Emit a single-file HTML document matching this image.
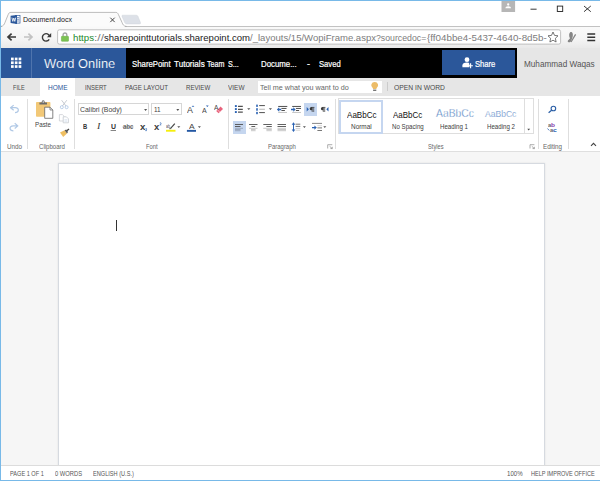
<!DOCTYPE html>
<html><head><meta charset="utf-8"><title>Document.docx</title>
<style>
html,body{margin:0;padding:0;}
body{width:600px;height:481px;position:relative;overflow:hidden;background:#fff;font-family:"Liberation Sans",sans-serif;}
.a{position:absolute;}
.t{position:absolute;white-space:pre;transform-origin:0 0;font-family:"Liberation Sans",sans-serif;}
svg{position:absolute;overflow:visible;}

</style></head>
<body>
<!-- ===== chrome title bar ===== -->
<div class="a" style="left:0;top:0;width:600px;height:26px;background:#fff"></div>
<!-- toolbar -->
<div class="a" style="left:0;top:26px;width:600px;height:22px;background:linear-gradient(#fafafa 0%,#f4f4f4 60%,#e9e9e9 100%)"></div>
<div class="a" style="left:0;top:26px;width:600px;height:0.8px;background:#c2c2c2"></div>
<!-- tab + new tab -->
<svg style="left:0;top:0" width="600" height="48" viewBox="0 0 600 48">
  <path d="M122.7 15.2 L136.2 15.2 Q137.4 15.2 137.9 16.3 L140.5 22.6 Q141 23.9 139.6 23.9 L126.6 23.9 Q125.3 23.9 124.8 22.8 L122 16.4 Q121.6 15.2 122.7 15.2Z" fill="#dde1e8" stroke="#d0d4db" stroke-width="0.5"/>
  <path d="M0.5 26.4 C3.5 26.4 4.2 24.4 5 22.4 L8.2 14.5 C8.9 12.8 9.6 12.4 11 12.4 L115.5 12.4 C117 12.4 117.6 12.8 118.4 14.5 L122 22.4 C122.8 24.4 123.6 26.4 126.5 26.4 Z" fill="#fbfbfb" stroke="none"/>
  <path d="M0.5 26.4 C3.5 26.4 4.2 24.4 5 22.4 L8.2 14.5 C8.9 12.8 9.6 12.4 11 12.4 L115.5 12.4 C117 12.4 117.6 12.8 118.4 14.5 L122 22.4 C122.8 24.4 123.6 26.4 126.5 26.4" fill="none" stroke="#8e8e8e" stroke-width="0.6"/>
  <rect x="2.5" y="25.9" width="122" height="1.1" fill="#fafafa"/>
</svg>
<!-- url box -->
<svg style="left:0;top:0" width="600" height="48" viewBox="0 0 600 48"><rect x="57.6" y="29.8" width="503" height="14.3" rx="1.8" fill="#fff" stroke="#b3b3b3" stroke-width="0.8"/></svg>

<!-- ===== Office header ===== -->
<div class="a" style="left:0;top:48px;width:126px;height:30px;background:#2b579a"></div>
<div class="a" style="left:31px;top:48px;width:1px;height:30px;background:#4f74ad"></div>
<div class="a" style="left:126px;top:48px;width:391px;height:30px;background:#000"></div>
<div class="a" style="left:441.7px;top:50.3px;width:73px;height:25px;background:#2b579a"></div>
<div class="a" style="left:517px;top:48px;width:83px;height:30px;background:#e6e6e6"></div>

<!-- ===== tab row ===== -->
<div class="a" style="left:0;top:78px;width:600px;height:17.6px;background:#e6e6e6"></div>
<div class="a" style="left:40px;top:78px;width:34.7px;height:18px;background:#fff"></div>
<div class="a" style="left:257.5px;top:80.8px;width:124.5px;height:12.2px;background:#fff"></div>
<div class="a" style="left:387px;top:82px;width:1px;height:9px;background:#cbcbcb"></div>

<!-- ===== ribbon ===== -->
<div class="a" style="left:0;top:95.6px;width:600px;height:55.4px;background:#fff"></div>
<div class="a" style="left:0;top:150.8px;width:600px;height:1px;background:#dfdfdf"></div>
<!-- group separators -->
<div class="a" style="left:27.2px;top:99px;width:0.8px;height:49.5px;background:#dedede"></div>
<div class="a" style="left:74.2px;top:99px;width:0.8px;height:49.5px;background:#dedede"></div>
<div class="a" style="left:228.4px;top:99px;width:0.8px;height:49.5px;background:#dedede"></div>
<div class="a" style="left:335px;top:99px;width:0.8px;height:49.5px;background:#dedede"></div>
<div class="a" style="left:537.7px;top:99px;width:0.8px;height:49.5px;background:#dedede"></div>
<div class="a" style="left:568.1px;top:99px;width:0.8px;height:49.5px;background:#dedede"></div>
<!-- font boxes -->
<div class="a" style="left:78.3px;top:103.3px;width:71.2px;height:12px;border:0.8px solid #d6d6d6;box-sizing:border-box;background:#fff"></div>
<div class="a" style="left:151.3px;top:103.3px;width:30.4px;height:12px;border:0.8px solid #d6d6d6;box-sizing:border-box;background:#fff"></div>
<!-- highlighted buttons -->
<div class="a" style="left:232.5px;top:120.7px;width:13px;height:13px;background:#c5d6ef"></div>
<div class="a" style="left:303.8px;top:102.8px;width:13.2px;height:12.9px;background:#c5d6ef"></div>
<!-- styles gallery -->
<div class="a" style="left:338.3px;top:98.4px;width:195.6px;height:36px;border:0.8px solid #dedede;box-sizing:border-box;background:#fff"></div>
<div class="a" style="left:523.6px;top:98.4px;width:0.8px;height:36px;background:#dedede"></div>
<div class="a" style="left:339px;top:99.5px;width:44.3px;height:34.2px;border:2px solid #c5d6f0;box-sizing:border-box;background:#fff"></div>

<!-- ===== document area ===== -->
<div class="a" style="left:0;top:151.6px;width:600px;height:314px;background:#f6f6f6"></div>
<div class="a" style="left:58px;top:162.7px;width:486.5px;height:303.3px;background:#fff;border:0.9px solid #d6dae0;border-bottom:none;box-sizing:border-box;box-shadow:0 0 2px rgba(0,0,0,0.09)"></div>
<div class="a" style="left:116px;top:220px;width:0.9px;height:11.3px;background:#333"></div>

<!-- ===== status bar ===== -->
<div class="a" style="left:0;top:465px;width:600px;height:16px;background:#fff"></div>
<div class="a" style="left:0;top:465px;width:600px;height:1px;background:#dcdcdc"></div>

<!-- === chrome icons === -->
<svg style="left:0;top:0" width="600" height="48" viewBox="0 0 600 48">
  <!-- word favicon -->
  <rect x="15.5" y="15.6" width="4.5" height="7.5" fill="#fff" stroke="#2b579a" stroke-width="0.7"/>
  <path d="M16.8 17.6H19.2M16.8 19.3H19.2M16.8 21H19.2" stroke="#2b579a" stroke-width="0.6"/>
  <path d="M10.6 15.8 L17 14.9 V23.9 L10.6 23 Z" fill="#2b579a"/>
  <path d="M11.9 17.6 L12.8 21.4 L13.8 18 L14.8 21.4 L15.7 17.6" fill="none" stroke="#fff" stroke-width="0.8"/>
  <!-- tab close -->
  <path d="M110.3 17.7 L114.7 22.1 M114.7 17.7 L110.3 22.1" stroke="#333" stroke-width="0.9"/>
  <!-- user box -->
  <rect x="501.5" y="1" width="13.6" height="11" fill="#b6b6b6"/>
  <circle cx="508.2" cy="4.5" r="1.15" fill="#fff"/>
  <path d="M505.4 8.3 Q505.4 6.2 508.2 6.2 Q511 6.2 511 8.3 Z" fill="#fff"/>
  <!-- window controls -->
  <path d="M530.5 9.2 H536.6" stroke="#222" stroke-width="0.9"/>
  <rect x="557.3" y="6.1" width="5.4" height="5.4" fill="none" stroke="#222" stroke-width="0.9"/>
  <path d="M584 6 L590.8 11.7 M590.8 6 L584 11.7" stroke="#222" stroke-width="0.9"/>
  <!-- back -->
  <path d="M8 37 H16 M11.6 33.6 L8 37 L11.6 40.4" fill="none" stroke="#3a3a3a" stroke-width="1.7" stroke-linecap="butt" stroke-linejoin="miter"/>
  <!-- forward -->
  <path d="M24 37 H32 M28.4 33.6 L32 37 L28.4 40.4" fill="none" stroke="#c2c2c2" stroke-width="1.7"/>
  <!-- reload -->
  <path d="M49.6 36.2 A3.7 3.7 0 1 0 49.2 39.4" fill="none" stroke="#3a3a3a" stroke-width="1.4"/>
  <path d="M51.2 33 V37.3 H46.9 Z" fill="#3a3a3a"/>
  <!-- lock -->
  <path d="M63.1 36.6 V35 A1.85 2 0 0 1 66.8 35 V36.6" fill="none" stroke="#a8a8a8" stroke-width="1.4"/>
  <rect x="61.4" y="36.3" width="7.1" height="5" rx="0.6" fill="#7cc353" stroke="#62a83e" stroke-width="0.5"/>
  <!-- star -->
  <path d="M553 32 L554.5 35.4 L558 35.8 L555.4 38.3 L556.1 42 L553 40.2 L549.9 42 L550.6 38.3 L548 35.8 L551.5 35.4 Z" fill="#fff" stroke="#555" stroke-width="0.8" stroke-linejoin="round"/>
  <!-- extension -->
  <path d="M570.4 32 C572.9 31.6 573.3 34.6 572.6 37 C572.2 38.6 571.6 40 570.8 41.4 C569.8 42.6 567.8 42.6 567.7 41.2 C568 39.8 569.4 39.4 570 38.2 C568.8 36.4 568.8 33.2 570.4 32 Z" fill="#858585"/>
  <path d="M571 42 L575.6 34.4" stroke="#858585" stroke-width="1.3" fill="none"/>
  <!-- hamburger -->
  <path d="M587.3 33.9 H595.2 M587.3 37.2 H595.2 M587.3 40.5 H595.2" stroke="#333" stroke-width="1.5"/>
</svg>

<!-- === header icons === -->
<svg style="left:0;top:48px" width="600" height="48" viewBox="0 48 600 48">
  <!-- waffle -->
  <g fill="#fff">
    <rect x="11" y="57.6" width="2.7" height="2.7"/><rect x="14.8" y="57.6" width="2.7" height="2.7"/><rect x="18.6" y="57.6" width="2.7" height="2.7"/>
    <rect x="11" y="61.4" width="2.7" height="2.7"/><rect x="14.8" y="61.4" width="2.7" height="2.7"/><rect x="18.6" y="61.4" width="2.7" height="2.7"/>
    <rect x="11" y="65.2" width="2.7" height="2.7"/><rect x="14.8" y="65.2" width="2.7" height="2.7"/><rect x="18.6" y="65.2" width="2.7" height="2.7"/>
  </g>
  <!-- share person+ -->
  <circle cx="467" cy="59.7" r="2.4" fill="#fff"/>
  <path d="M462.4 67.2 V65.6 Q462.4 62.6 467 62.6 Q469.4 62.6 469.4 64 V67.2 Z" fill="#fff"/>
  <path d="M470.6 63.2 V68.2 M468.3 65.7 H472.9" stroke="#fff" stroke-width="1.1"/>
  <path d="M469.5 63 H471.8 V68.3 H469.5Z" fill="none"/>
  <!-- bulb -->
  <path d="M374.7 82 A3.4 3.3 0 0 1 376.7 88 L376.3 89.1 H373.1 L372.7 88 A3.4 3.3 0 0 1 374.7 82 Z" fill="#ecbc68"/>
  <path d="M373.1 90.2 H376.3" stroke="#3a3a3a" stroke-width="1"/>
</svg>
<!-- === ribbon icons === -->
<svg style="left:0;top:96px" width="600" height="56" viewBox="0 96 600 56">
  <!-- undo / redo -->
  <g fill="none" stroke="#b1c9e6" stroke-width="1.2" stroke-linejoin="round">
    <path d="M13.7 105.1 L10.5 107.7 L13.7 110.3 M10.8 107.7 H15.2 C17.4 107.7 18.5 109 18.3 110.4 C18.1 111.8 16.9 112.6 15 112.6"/>
    <path d="M14.7 123.3 L17.9 125.9 L14.7 128.5 M17.6 125.9 H13.2 C11 125.9 9.9 127.2 10.1 128.6 C10.3 130 11.5 130.8 13.4 130.8"/>
  </g>
  <!-- paste -->
  <rect x="36" y="102" width="14.4" height="14.8" rx="0.8" fill="#f2c877"/>
  <path d="M39.4 104.6 V102.6 H41.6 Q41.6 100.2 43.2 100.2 Q44.8 100.2 44.8 102.6 H47 V104.6 Z" fill="#6b6b6b"/>
  <circle cx="43.2" cy="102" r="0.7" fill="#fff"/>
  <path d="M44.7 107.2 H50 L52.8 110 V118.3 H44.7 Z" fill="#fff" stroke="#666" stroke-width="0.8"/>
  <path d="M50 107.2 V110 H52.8" fill="none" stroke="#666" stroke-width="0.7"/>
  <!-- scissors (disabled) -->
  <path d="M61.6 100.2 L66 106 M66.8 100.2 L62.4 106" stroke="#b9bec6" stroke-width="0.8" fill="none"/>
  <circle cx="61.8" cy="107.2" r="1.5" fill="none" stroke="#a9c3e3" stroke-width="0.8"/>
  <circle cx="66.6" cy="107.2" r="1.5" fill="none" stroke="#a9c3e3" stroke-width="0.8"/>
  <!-- copy (disabled) -->
  <path d="M59.4 114.6 H62.4 L64 116.2 V121 H59.4 Z" fill="#fff" stroke="#c6c9ce" stroke-width="0.7"/>
  <path d="M63.2 116.8 H66.4 L68.4 118.8 V122.8 H63.2 Z" fill="#fff" stroke="#bfc4cb" stroke-width="0.7"/>
  <path d="M64.4 119.8 H67.2 M64.4 121.2 H67.2" stroke="#c3d4ea" stroke-width="0.6"/>
  <!-- format painter -->
  <path d="M60 132.4 L64.6 130.2 L67 133.4 L63.2 137 Z" fill="#efbf62"/>
  <path d="M64.6 130.2 L66.2 129.4 L68 132 L67 133.4 Z" fill="#555"/>
  <path d="M66.8 130.8 L69 129" stroke="#444" stroke-width="1.4"/>
  <!-- combo arrows -->
  <path d="M144.1 109.1 H147.1 L145.6 110.9 Z M176.3 109.1 H179.3 L177.8 110.9 Z" fill="#555"/>
  <!-- grow / shrink triangles -->
  <path d="M191.6 106.7 L193 105.4 L194.4 106.7 Z" fill="#2b63b4"/>
  <path d="M205.9 105.4 H208.7 L207.3 106.9 Z" fill="#2b63b4"/>
  <!-- clear formatting eraser -->
  <path d="M216.2 110.9 L220.6 106.5 L223 108.9 L218.6 113.3 Z" fill="#e8637c"/>
  <path d="M217.4 109.7 L219.8 112.1" stroke="#fff" stroke-width="0.5"/>
  <!-- sub/sup blue digits -->
  <path d="M145.5 128.6 Q146.9 128.1 146.8 129.1 Q146.7 129.8 145.5 130.6 H147" fill="none" stroke="#2b63b4" stroke-width="0.65"/>
  <path d="M159.8 122.9 Q161.2 122.4 161.1 123.4 Q161 124.1 159.8 124.9 H161.3" fill="none" stroke="#2b63b4" stroke-width="0.65"/>
  <!-- highlight -->
  <path d="M170.6 128.3 L174.8 123.6" stroke="#444" stroke-width="1.2"/>
  <path d="M169.6 127.6 L171.4 128.9 L169.4 129.3 Z" fill="#444"/>
  <rect x="166" y="129.8" width="9.5" height="1.9" fill="#f5ee0e"/>
  <path d="M177.3 126.3 H180.3 L178.8 128 Z" fill="#555"/>
  <!-- font color -->
  <rect x="186.9" y="129.9" width="9.1" height="1.9" fill="#2458a3"/>
  <path d="M197.9 126.3 H200.9 L199.4 128 Z" fill="#555"/>
  <!-- U underline -->
  <path d="M110.6 130.5 H116" stroke="#333" stroke-width="0.6"/>
  <!-- abc strike -->
  <path d="M122.6 127 H133.4" stroke="#444" stroke-width="0.55"/>

  <!-- bullets -->
  <g fill="#2b63b4"><rect x="234.9" y="105.1" width="1.9" height="1.9"/><rect x="234.9" y="108.1" width="1.9" height="1.9"/><rect x="234.9" y="111.1" width="1.9" height="1.9"/></g>
  <path d="M238 106.3 H242.8 M238 109.3 H242.8 M238 112.2 H242.8" stroke="#505050" stroke-width="1.3"/>
  <path d="M247.2 108.2 H250.4 L248.8 110 Z" fill="#555"/>
  <!-- numbering -->
  <g fill="#2b63b4"><rect x="256.2" y="104.6" width="1.6" height="2.3"/><rect x="256.2" y="108.2" width="1.6" height="2.5"/><rect x="256.2" y="111.9" width="1.6" height="2.3"/></g>
  <path d="M259.2 105.6 H264.9 M259.2 112.6 H264.9" stroke="#505050" stroke-width="1"/>
  <path d="M259.2 109.3 H264.9" stroke="#c0c0c0" stroke-width="1.2"/>
  <path d="M268.8 108.2 H272 L270.4 110 Z" fill="#555"/>
  <!-- decrease indent -->
  <path d="M278.2 106.45 H287.3" stroke="#505050" stroke-width="1"/>
  <path d="M281.4 108.45 H286.5" stroke="#505050" stroke-width="1"/>
  <path d="M281.4 110.5 H284.9" stroke="#505050" stroke-width="1"/>
  <path d="M278.2 112.45 H287" stroke="#c4c4c4" stroke-width="1"/>
  <path d="M276.9 109.5 L279.2 107.3 V108.8 H281.2 V110.2 H279.2 V111.7 Z" fill="#2b63b4"/>
  <!-- increase indent -->
  <path d="M292.2 106.45 H301" stroke="#505050" stroke-width="1"/>
  <path d="M295.9 108.45 H301" stroke="#505050" stroke-width="1"/>
  <path d="M295.9 110.5 H299.1" stroke="#505050" stroke-width="1"/>
  <path d="M292.2 112.45 H301" stroke="#c4c4c4" stroke-width="1"/>
  <path d="M295.6 109.5 L293.3 107.3 V108.8 H291 V110.2 H293.3 V111.7 Z" fill="#2b63b4"/>
  <!-- LTR -->
  <path d="M306.7 107.1 L308.9 109.3 L306.7 111.5 Z" fill="#2b63b4"/>
  <path d="M311.4 107.4 H314.4 M313.7 107.3 V112 M312.2 107.3 V112" stroke="#3c3c3c" stroke-width="0.7" fill="none"/>
  <path d="M312.3 107.1 H311.4 A1.7 1.6 0 0 0 311.4 110.3 H312.3 Z" fill="#3c3c3c"/>
  <!-- RTL -->
  <path d="M328.5 107.1 L326.3 109.3 L328.5 111.5 Z" fill="#2b63b4"/>
  <path d="M322.6 107.4 H325.4 M324.7 107.3 V112 M323.3 107.3 V112" stroke="#3c3c3c" stroke-width="0.7" fill="none"/>
  <path d="M323.4 107.1 H322.6 A1.7 1.6 0 0 0 322.6 110.3 H323.4 Z" fill="#3c3c3c"/>
  <!-- align left -->
  <path d="M235 124.5 H243 M235 126.5 H240.5" stroke="#505050" stroke-width="0.9"/>
  <path d="M235 128.3 H243 M235 129.5 H240.5 M235 130.7 H240.5" stroke="#8793a8" stroke-width="0.7"/>
  <!-- center -->
  <path d="M249 124.5 H257.5 M251.4 126.5 H255.2" stroke="#505050" stroke-width="0.9"/>
  <path d="M249 128.3 H257.5 M251 129.5 H255.6 M251 130.7 H255.6" stroke="#b0b0b0" stroke-width="0.7"/>
  <!-- right -->
  <path d="M263.3 124.5 H271.8 M266.4 126.5 H271.8" stroke="#505050" stroke-width="0.9"/>
  <path d="M263.3 128.3 H271.8 M266.4 129.5 H271.8 M266.4 130.7 H271.8" stroke="#b0b0b0" stroke-width="0.7"/>
  <!-- justify -->
  <path d="M277.5 124.5 H286 M277.5 126.5 H286" stroke="#505050" stroke-width="0.9"/>
  <path d="M277.5 128.3 H286 M277.5 129.5 H286 M277.5 130.7 H286" stroke="#b0b0b0" stroke-width="0.7"/>
  <!-- line spacing -->
  <path d="M293.5 123.6 V130.8" stroke="#2b63b4" stroke-width="1"/>
  <path d="M291.7 124.8 L293.5 122.3 L295.3 124.8 Z M291.7 129.6 L293.5 132.1 L295.3 129.6 Z" fill="#2b63b4"/>
  <path d="M295.6 124.2 H300.3 M295.6 126.4 H300.3" stroke="#555" stroke-width="0.8"/>
  <path d="M295.6 128.5 H300.3 M295.6 130.2 H300.3" stroke="#c4c4c4" stroke-width="0.7"/>
  <path d="M302.9 126.3 H305.9 L304.4 128 Z" fill="#555"/>
  <!-- special indent -->
  <path d="M312 123.4 H322" stroke="#555" stroke-width="0.7"/>
  <path d="M317.4 125.7 H322" stroke="#c4c4c4" stroke-width="0.7"/>
  <path d="M317.4 127.9 H322 M317.4 130.5 H322" stroke="#555" stroke-width="0.8"/>
  <path d="M316.8 127.6 L314.4 125.5 V127 H312 V128.2 H314.4 V129.7 Z" fill="#2b63b4"/>
  <path d="M323.3 126.3 H326.3 L324.8 128 Z" fill="#555"/>
  <!-- launchers -->
  <g fill="none" stroke="#777" stroke-width="0.6">
    <path d="M332.3 144.7 H327.7 V148.5 M329.6 146.3 L332.2 148.5 M332.3 146.8 V148.6 H330.4"/>
    <path d="M534.4 144.7 H530 V148.5 M531.8 146.3 L534.3 148.5 M534.4 146.8 V148.6 H532.5"/>
  </g>
  <!-- gallery arrow -->
  <path d="M527.3 128.7 H530.1 L528.7 130.4 Z" fill="#444"/>
  <!-- find -->
  <circle cx="553.4" cy="108.5" r="2.3" fill="none" stroke="#2b5fa6" stroke-width="1.1"/>
  <path d="M551.6 110.3 L548.6 112.8" stroke="#2b5fa6" stroke-width="1.3"/>
  <!-- replace arrow -->
  <path d="M547.4 128.6 L549.4 130.4" stroke="#2b63b4" stroke-width="0.8"/>
  <!-- chevron -->
  <path d="M591 145.8 L593.5 143.3 L596 145.8" fill="none" stroke="#444" stroke-width="1.1"/>
</svg>


<!-- ===== window border ===== -->
<div class="a" style="left:0;top:0;width:600px;height:1px;background:#78b9e8"></div>
<div class="a" style="left:0;top:0;width:1.1px;height:481px;background:#78b9e8"></div>
<div class="a" style="left:0;top:479.9px;width:600px;height:1.1px;background:#78b9e8"></div>

<div class="t" style="left:23.00px;top:16.00px;font-size:7.6px;line-height:8.489px;color:#222;font-weight:400;transform:scaleX(0.9286);">Document.docx</div>
<div class="t" style="left:72.50px;top:33.00px;font-size:9.4px;line-height:10.500px;color:#1a8a2c;font-weight:400;transform:scaleX(1.0331);">https</div>
<div class="t" style="left:93.50px;top:33.00px;font-size:9.4px;line-height:10.500px;color:#7c7c7c;font-weight:400;transform:scaleX(1.2774);">://</div>
<div class="t" style="left:103.50px;top:33.00px;font-size:9.4px;line-height:10.500px;color:#222;font-weight:400;transform:scaleX(1.0188);">sharepointtutorials.sharepoint.com</div>
<div class="t" style="left:249.50px;top:33.00px;font-size:9.4px;line-height:10.500px;color:#7c7c7c;font-weight:400;transform:scaleX(1.0174);">/_layouts/15/WopiFrame.aspx</div>
<div class="t" style="left:375.50px;top:33.00px;font-size:9.4px;line-height:10.500px;color:#7c7c7c;font-weight:400;transform:scaleX(0.9323);">?sourcedoc=</div>
<div class="t" style="left:426.80px;top:33.00px;font-size:9.4px;line-height:10.500px;color:#7c7c7c;font-weight:400;transform:scaleX(1.0453);">{ff04bbe4-5437-4640-8d5b-</div>
<div class="t" style="left:43.50px;top:57.00px;font-size:13px;line-height:14.521px;color:#fff;font-weight:400;transform:scaleX(0.9887);-webkit-text-stroke:0.14px #2b579a;">Word Online</div>
<div class="t" style="left:131.70px;top:60.00px;font-size:8.4px;line-height:9.383px;color:#fff;font-weight:400;transform:scaleX(0.9315);-webkit-text-stroke:0.2px #fff;">SharePoint</div>
<div class="t" style="left:173.70px;top:60.00px;font-size:8.4px;line-height:9.383px;color:#fff;font-weight:400;transform:scaleX(0.9650);-webkit-text-stroke:0.2px #fff;">Tutorials</div>
<div class="t" style="left:207.00px;top:60.00px;font-size:8.4px;line-height:9.383px;color:#fff;font-weight:400;transform:scaleX(0.8494);-webkit-text-stroke:0.2px #fff;">Team</div>
<div class="t" style="left:228.40px;top:60.00px;font-size:8.4px;line-height:9.383px;color:#fff;font-weight:400;transform:scaleX(0.8586);-webkit-text-stroke:0.2px #fff;">S...</div>
<div class="t" style="left:261.30px;top:60.00px;font-size:8.4px;line-height:9.383px;color:#fff;font-weight:400;transform:scaleX(0.9352);-webkit-text-stroke:0.2px #fff;">Docume...</div>
<div class="t" style="left:307.00px;top:60.00px;font-size:8.4px;line-height:9.383px;color:#fff;font-weight:400;transform:scaleX(1.0726);-webkit-text-stroke:0.2px #fff;">-</div>
<div class="t" style="left:318.80px;top:60.00px;font-size:8.4px;line-height:9.383px;color:#fff;font-weight:400;transform:scaleX(0.9137);-webkit-text-stroke:0.2px #fff;">Saved</div>
<div class="t" style="left:475.00px;top:60.00px;font-size:8.4px;line-height:9.383px;color:#fff;font-weight:400;transform:scaleX(0.9079);-webkit-text-stroke:0.2px #fff;">Share</div>
<div class="t" style="left:523.80px;top:60.00px;font-size:8.6px;line-height:9.606px;color:#555;font-weight:400;transform:scaleX(0.9528);">Muhammad Waqas</div>
<div class="t" style="left:13.30px;top:84.00px;font-size:7.8px;line-height:8.713px;color:#484848;font-weight:400;transform:scaleX(0.7104);">FILE</div>
<div class="t" style="left:48.00px;top:84.00px;font-size:7.8px;line-height:8.713px;color:#2b579a;font-weight:400;transform:scaleX(0.8331);">HOME</div>
<div class="t" style="left:85.30px;top:84.00px;font-size:7.8px;line-height:8.713px;color:#484848;font-weight:400;transform:scaleX(0.7627);">INSERT</div>
<div class="t" style="left:125.00px;top:84.00px;font-size:7.8px;line-height:8.713px;color:#484848;font-weight:400;transform:scaleX(0.7981);">PAGE LAYOUT</div>
<div class="t" style="left:185.80px;top:84.00px;font-size:7.8px;line-height:8.713px;color:#484848;font-weight:400;transform:scaleX(0.7866);">REVIEW</div>
<div class="t" style="left:227.50px;top:84.00px;font-size:7.8px;line-height:8.713px;color:#484848;font-weight:400;transform:scaleX(0.8276);">VIEW</div>
<div class="t" style="left:260.30px;top:84.00px;font-size:7.8px;line-height:8.713px;color:#666;font-weight:400;transform:scaleX(0.9219);">Tell me what you want to do</div>
<div class="t" style="left:393.70px;top:84.00px;font-size:7.8px;line-height:8.713px;color:#484848;font-weight:400;transform:scaleX(0.8656);">OPEN IN WORD</div>
<div class="t" style="left:7.00px;top:143.00px;font-size:7.0px;line-height:7.819px;color:#666;font-weight:400;transform:scaleX(0.8964);">Undo</div>
<div class="t" style="left:38.70px;top:143.00px;font-size:7.0px;line-height:7.819px;color:#666;font-weight:400;transform:scaleX(0.8676);">Clipboard</div>
<div class="t" style="left:145.80px;top:143.00px;font-size:7.0px;line-height:7.819px;color:#666;font-weight:400;transform:scaleX(0.8348);">Font</div>
<div class="t" style="left:268.00px;top:143.00px;font-size:7.0px;line-height:7.819px;color:#666;font-weight:400;transform:scaleX(0.8501);">Paragraph</div>
<div class="t" style="left:428.30px;top:143.00px;font-size:7.0px;line-height:7.819px;color:#666;font-weight:400;transform:scaleX(0.8131);">Styles</div>
<div class="t" style="left:543.00px;top:143.00px;font-size:7.0px;line-height:7.819px;color:#666;font-weight:400;transform:scaleX(0.8876);">Editing</div>
<div class="t" style="left:35.30px;top:121.00px;font-size:7.4px;line-height:8.266px;color:#444;font-weight:400;transform:scaleX(0.8463);">Paste</div>
<div class="t" style="left:80.30px;top:106.00px;font-size:7.8px;line-height:8.713px;color:#444;font-weight:400;transform:scaleX(0.8871);">Calibri (Body)</div>
<div class="t" style="left:153.70px;top:106.00px;font-size:7.8px;line-height:8.713px;color:#444;font-weight:400;transform:scaleX(0.8154);">11</div>
<div class="t" style="left:346.70px;top:110.00px;font-size:9.2px;line-height:10.276px;color:#111;font-weight:400;transform:scaleX(0.8778);">AaBbCc</div>
<div class="t" style="left:351.30px;top:123.00px;font-size:6.8px;line-height:7.596px;color:#3c3c3c;font-weight:400;transform:scaleX(0.9449);">Normal</div>
<div class="t" style="left:393.30px;top:110.00px;font-size:9.2px;line-height:10.276px;color:#111;font-weight:400;transform:scaleX(0.8660);">AaBbCc</div>
<div class="t" style="left:392.00px;top:123.00px;font-size:6.8px;line-height:7.596px;color:#3c3c3c;font-weight:400;transform:scaleX(0.9021);">No Spacing</div>
<div class="t" style="left:435.80px;top:107.00px;font-size:11.4px;line-height:12.734px;color:#4a7dbd;font-weight:400;transform:scaleX(0.9068);-webkit-text-stroke:0.3px #fff;">AaBbCc</div>
<div class="t" style="left:440.00px;top:123.00px;font-size:6.8px;line-height:7.596px;color:#3c3c3c;font-weight:400;transform:scaleX(0.9032);">Heading 1</div>
<div class="t" style="left:485.00px;top:110.00px;font-size:8.6px;line-height:9.606px;color:#5585c4;font-weight:400;transform:scaleX(0.9958);-webkit-text-stroke:0.2px #fff;">AaBbCc</div>
<div class="t" style="left:487.00px;top:123.00px;font-size:6.8px;line-height:7.596px;color:#3c3c3c;font-weight:400;transform:scaleX(0.9032);">Heading 2</div>
<div class="t" style="left:82.80px;top:123.00px;font-size:7.6px;line-height:8.489px;color:#333;font-weight:700;transform:scaleX(0.7658);">B</div>
<div class="t" style="left:97.20px;top:123.00px;font-size:8px;line-height:8.936px;color:#333;font-weight:400;transform:scaleX(1.2725);font-style:italic;font-family:'Liberation Serif',serif;">I</div>
<div class="t" style="left:110.80px;top:123.00px;font-size:7.4px;line-height:8.266px;color:#333;font-weight:700;transform:scaleX(0.9357);">U</div>
<div class="t" style="left:123.00px;top:123.00px;font-size:6.6px;line-height:7.372px;color:#444;font-weight:400;transform:scaleX(0.9398);">abc</div>
<div class="t" style="left:9.80px;top:470.00px;font-size:6.9px;line-height:7.707px;color:#555;font-weight:400;transform:scaleX(0.8120);">PAGE 1 OF 1</div>
<div class="t" style="left:55.00px;top:470.00px;font-size:6.9px;line-height:7.707px;color:#555;font-weight:400;transform:scaleX(0.8424);">0 WORDS</div>
<div class="t" style="left:92.90px;top:470.00px;font-size:6.9px;line-height:7.707px;color:#555;font-weight:400;transform:scaleX(0.8135);">ENGLISH (U.S.)</div>
<div class="t" style="left:507.40px;top:470.00px;font-size:6.9px;line-height:7.707px;color:#555;font-weight:400;transform:scaleX(0.8851);">100%</div>
<div class="t" style="left:531.20px;top:470.00px;font-size:6.9px;line-height:7.707px;color:#555;font-weight:400;transform:scaleX(0.8089);">HELP IMPROVE OFFICE</div>
<div class="t" style="left:186.90px;top:106.00px;font-size:8.5px;line-height:9.495px;color:#444;font-weight:400;transform:scaleX(1.0402);">A</div>
<div class="t" style="left:201.70px;top:107.00px;font-size:6.5px;line-height:7.261px;color:#444;font-weight:400;transform:scaleX(1.0820);">A</div>
<div class="t" style="left:214.00px;top:104.00px;font-size:6.4px;line-height:7.149px;color:#444;font-weight:400;transform:scaleX(1.0315);">A</div>
<div class="t" style="left:188.70px;top:123.00px;font-size:8px;line-height:8.936px;color:#444;font-weight:400;transform:scaleX(1.0480);">A</div>
<div class="t" style="left:139.80px;top:122.00px;font-size:9.6px;line-height:10.723px;color:#3c3c3c;font-weight:700;transform:scaleX(1.0105);">x</div>
<div class="t" style="left:154.00px;top:122.00px;font-size:9.6px;line-height:10.723px;color:#3c3c3c;font-weight:700;transform:scaleX(0.9918);">x</div>
<div class="t" style="left:166.40px;top:124.00px;font-size:4.6px;line-height:5.138px;color:#555;font-weight:400;transform:scaleX(0.7805);">ab</div>
<div class="t" style="left:547.80px;top:122.00px;font-size:5.8px;line-height:6.479px;color:#666;font-weight:700;transform:scaleX(0.9894);">a</div>
<div class="t" style="left:551.00px;top:122.00px;font-size:5.8px;line-height:6.479px;color:#8a3fb0;font-weight:700;transform:scaleX(1.1278);">b</div>
<div class="t" style="left:550.20px;top:127.00px;font-size:5.8px;line-height:6.479px;color:#666;font-weight:700;transform:scaleX(0.9894);">a</div>
<div class="t" style="left:553.40px;top:127.00px;font-size:5.8px;line-height:6.479px;color:#2b63b4;font-weight:700;transform:scaleX(1.1749);">c</div>
</body></html>
